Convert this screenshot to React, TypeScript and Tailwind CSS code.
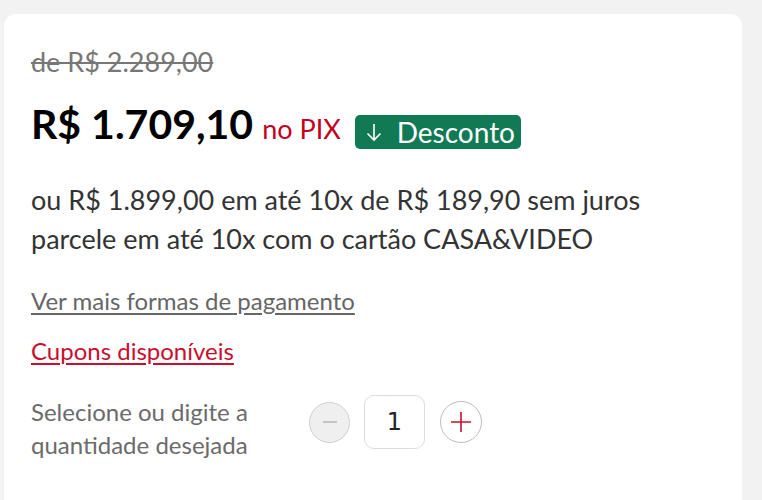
import { useState } from "react";

const lato = { fontFamily: "Lato, 'Liberation Sans', sans-serif" };

export default function App() {
  const [qty, setQty] = useState(1);

  return (
    <div className="min-h-[500px] bg-[#f2f2f2] pt-[14px] pl-1 pr-5" style={lato}>
      <div className="min-h-[486px] rounded-t-xl bg-white pl-[27px] pt-[33px]">
        <p className="text-[27px] leading-[30px] text-[#777] line-through">de R$ 2.289,00</p>

        <div className="mt-[22px] flex items-end">
          <span className="text-[41px] font-bold leading-[50px] text-black">R$ 1.709,10</span>
          <span className="mb-[4px] ml-[9px] text-[27px] leading-[32px] text-[#c4001d]">no PIX</span>
          <span className="ml-[14px] flex h-[34px] items-center gap-[14px] rounded-[5px] bg-[#117a54] pl-[10px] pr-[6px] text-[28px] text-white">
            <svg width="18" height="20" viewBox="0 0 18 20" fill="none">
              <path d="M9 2v16M2.5 11.5 9 18l6.5-6.5" stroke="white" strokeWidth="1.6" />
            </svg>
            Desconto
          </span>
        </div>

        <div className="mt-[31px] text-[27px] leading-[39px] text-[#333]">
          <p>ou R$ 1.899,00 em até 10x de R$ 189,90 sem juros</p>
          <p>parcele em até 10x com o cartão CASA&amp;VIDEO</p>
        </div>

        <a href="#" className="mt-[28px] block w-fit text-[24px] leading-[30px] text-[#666] underline underline-offset-[3px]">
          Ver mais formas de pagamento
        </a>
        <a href="#" className="mt-[20px] block w-fit text-[24px] leading-[30px] text-[#c8102e] underline underline-offset-[3px]">
          Cupons disponíveis
        </a>

        <div className="mt-[29px] flex items-start">
          <p className="w-[278px] text-[24px] leading-[33px] text-[#6b6b6b]">
            Selecione ou digite a<br />quantidade desejada
          </p>
          <div className="flex items-center">
            <button
              onClick={() => setQty(Math.max(1, qty - 1))}
              className="flex h-[41px] w-[41px] items-center justify-center rounded-full border border-[#cfcfcf] bg-[#efefef]"
            >
              <span className="h-[1.5px] w-[14px] bg-[#c4c4c4]" />
            </button>
            <div
              className="ml-[14px] flex h-[54px] w-[61px] items-center justify-center rounded-[10px] border border-[#dcdcdc] text-[24px] text-[#222]"
              style={{ fontFamily: "'DejaVu Sans', sans-serif" }}
            >
              {qty}
            </div>
            <button
              onClick={() => setQty(qty + 1)}
              className="ml-[15px] flex h-[42px] w-[42px] items-center justify-center rounded-full border border-[#bdbdbd] bg-white"
            >
              <svg width="22" height="22" viewBox="0 0 22 22">
                <path d="M11 1v20M1 11h20" stroke="#c8102e" strokeWidth="1.6" />
              </svg>
            </button>
          </div>
        </div>
      </div>
    </div>
  );
}
